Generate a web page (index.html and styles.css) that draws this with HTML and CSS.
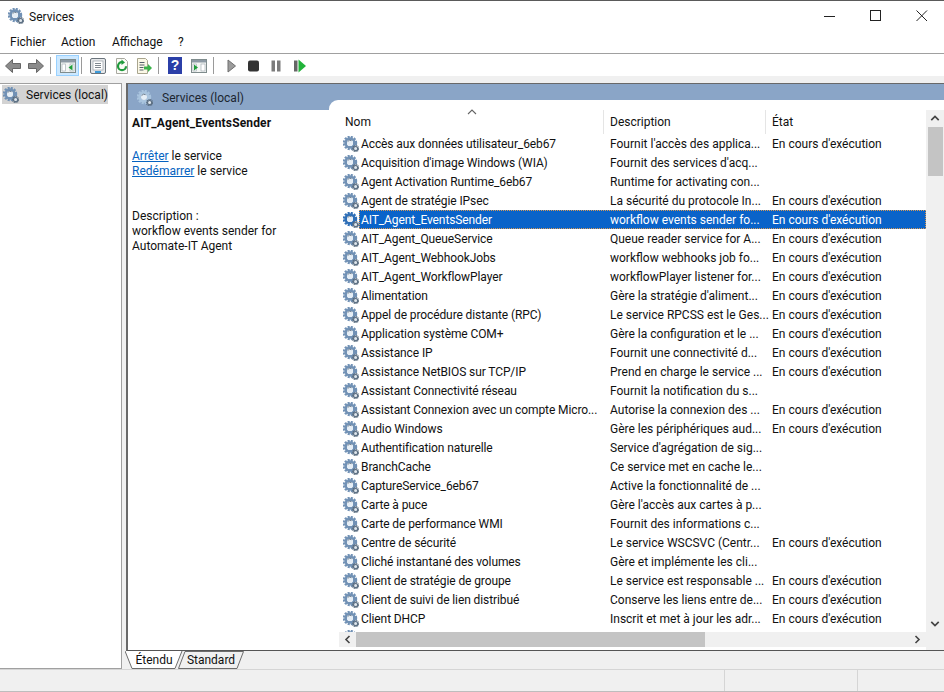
FILE: index.html
```html
<!DOCTYPE html>
<html lang="fr">
<head>
<meta charset="utf-8">
<title>Services</title>
<link rel="stylesheet" href="styles.css">
</head>
<body>
<svg class="defs" width="0" height="0">
  <symbol id="gear" viewBox="0 0 16 16">
    <circle cx="7" cy="7" r="6.100" fill="none" stroke="currentColor" stroke-width="2.200" stroke-dasharray="2.100 1.100"/>
    <circle cx="7" cy="7" r="4.400" fill="none" stroke="currentColor" stroke-width="2.600"/>
    <circle cx="7" cy="7" r="3" fill="#e6eef6"/>
    <path d="M4.600 5.600a3 3 0 0 1 4-.9" fill="none" stroke="#6f7f8f" stroke-width="1"/>
    <circle cx="12.600" cy="12.600" r="3" fill="none" stroke="#56687a" stroke-width="1.300" stroke-dasharray="1.100 .7"/>
    <circle cx="12.600" cy="12.600" r="2.100" fill="#dfe6ec" stroke="#5d7084" stroke-width="1.200"/>
  </symbol>
  <symbol id="panel" viewBox="0 0 16 16">
    <rect x=".5" y="1.5" width="15" height="13" fill="#f4f6f4" stroke="#7f8c8d"/>
    <rect x="1" y="2" width="14" height="2.5" fill="#8d9aa5"/>
    <rect x="2" y="6" width="3.5" height="7" fill="#fff" stroke="#9aa5ad" stroke-width=".6"/>
    <rect x="10" y="6" width="4" height="7" fill="#fff" stroke="#9aa5ad" stroke-width=".6"/>
  </symbol>
</svg>
<div class="window">
  <header class="titlebar">
    <svg class="gear title-gear"><use href="#gear"/></svg>
    <span class="title">Services</span>
    <div class="controls">
      <svg class="ctl" viewBox="0 0 12 12"><path d="M0 6.500h11" stroke="#222" fill="none"/></svg>
      <svg class="ctl" viewBox="0 0 12 12"><rect x=".5" y=".5" width="10" height="10" stroke="#222" fill="none"/></svg>
      <svg class="ctl" viewBox="0 0 12 12"><path d="M.5.5l10.500 10.500M11 .5L.5 11" stroke="#222" fill="none"/></svg>
    </div>
  </header>
  <nav class="menu">
    <span class="m-fichier">Fichier</span><span class="m-action">Action</span><span class="m-affichage">Affichage</span><span class="m-help">?</span>
  </nav>
  <div class="toolbar">
    <svg class="t16 ml5" viewBox="0 0 16 16"><path d="M.5 8L7.500 1.500v4h8v5h-8v4z" fill="#8b8b8b" stroke="#666"/></svg>
    <svg class="t16 ml7" viewBox="0 0 16 16"><path d="M15.500 8L8.500 1.500v4h-8v5h8v4z" fill="#8b8b8b" stroke="#666"/></svg>
    <i class="sep ml6"></i>
    <span class="active ml5">
      <svg class="t16" viewBox="0 0 16 16"><use href="#panel"/><path d="M12.500 6.500v6L8.500 9.500z" fill="#1f9d3a"/></svg>
    </span>
    <i class="sep ml2"></i>
    <svg class="t16 ml8" viewBox="0 0 16 16"><rect x=".5" y=".5" width="15" height="15" rx="1.500" fill="#e6e8ea" stroke="#6b747c"/><rect x="3" y="3" width="10" height="9" fill="#fff" stroke="#98a2aa" stroke-width=".7"/><path d="M5 5.500h6M5 7.500h6M5 9.500h6" stroke="#5f6b75" stroke-width=".8"/><rect x="5" y="13" width="6" height="2" fill="#3c9ad8"/></svg>
    <svg class="t16 ml8" viewBox="0 0 16 16"><path d="M2.500.5h8l3 3v12h-11z" fill="#fbfbf6" stroke="#a9a9a0"/><path d="M8 4.200a4 4 0 1 0 4 4" fill="none" stroke="#1f9a3c" stroke-width="2.200"/><path d="M7.500 1.500l3.500 3-3.500 2.500z" fill="#1f9a3c"/></svg>
    <svg class="t16 ml6" viewBox="0 0 16 16"><path d="M1.500.5h8l2 2v13h-10z" fill="#fbf8e6" stroke="#a9a58e"/><path d="M3.500 4.500h5M3.500 7h5M3.500 9.500h4M3.500 12h4" stroke="#55606a"/><path d="M8 8.500h4V6l4 4-4 4v-2.500H8z" fill="#3bb34a"/></svg>
    <i class="sep ml6"></i>
    <span class="help ml9">?</span>
    <svg class="t16 ml9" viewBox="0 0 16 16"><use href="#panel"/><path d="M3 6.500v6l4-3z" fill="#1f9d3a"/></svg>
    <i class="sep ml6"></i>
    <svg class="t10 ml13" viewBox="0 0 10 16"><path d="M1 2l7.500 6L1 14z" fill="#9c9c9c" stroke="#6f6f6f"/></svg>
    <svg class="t11 ml11" viewBox="0 0 11 16"><rect y="2.500" width="11" height="11" rx="2" fill="#333"/></svg>
    <svg class="t10 ml12" viewBox="0 0 10 16"><path d="M.5 2.500h3.500v11H.5zM6 2.500h3.500v11H6z" fill="#7b7b7b"/></svg>
    <svg class="t12 ml13" viewBox="0 0 12 16"><rect y="2.500" width="3.500" height="11" fill="#666"/><path d="M4.500 1.500l7.500 6.500-7.500 6.500z" fill="#22b33a"/></svg>
  </div>
  <div class="band"></div>
  <main class="main">
    <aside class="tree">
      <div class="tree-item"><svg class="gear tree-gear"><use href="#gear"/></svg><span>Services (local)</span></div>
    </aside>
    <section class="detail">
      <div class="content">
        <div class="desc">
          <div class="desc-head"><svg class="gear head-gear"><use href="#gear"/></svg><span>Services (local)</span></div>
          <div class="desc-body">
            <h1>AIT_Agent_EventsSender</h1>
            <p class="actions"><a href="#">Arrêter</a> le service<br><a href="#">Redémarrer</a> le service</p>
            <p>Description :<br>workflow events sender for<br>Automate-IT Agent</p>
          </div>
        </div>
        <div class="list">
          <div class="list-top">
            <div class="table">
              <div class="thead">
                <span class="sort">
                  <svg viewBox="0 0 10 6" width="10" height="6"><path d="M1 5l4-4 4 4" fill="none" stroke="#666" stroke-width="1.100"/></svg>
                </span>
                <div class="th th-name">Nom</div>
                <div class="th th-desc">Description</div>
                <div class="th th-state">État</div>
              </div>
              <div class="tbody">
                <div class="row"><svg class="gear"><use href="#gear"/></svg><div class="cells"><span class="c-name">Accès aux données utilisateur_6eb67</span><span class="c-desc">Fournit l'accès des applica...</span><span class="c-state">En cours d'exécution</span></div></div>
                <div class="row"><svg class="gear"><use href="#gear"/></svg><div class="cells"><span class="c-name">Acquisition d'image Windows (WIA)</span><span class="c-desc">Fournit des services d'acq...</span><span class="c-state"></span></div></div>
                <div class="row"><svg class="gear"><use href="#gear"/></svg><div class="cells"><span class="c-name">Agent Activation Runtime_6eb67</span><span class="c-desc">Runtime for activating con...</span><span class="c-state"></span></div></div>
                <div class="row"><svg class="gear"><use href="#gear"/></svg><div class="cells"><span class="c-name">Agent de stratégie IPsec</span><span class="c-desc">La sécurité du protocole In...</span><span class="c-state">En cours d'exécution</span></div></div>
                <div class="row selected"><svg class="gear"><use href="#gear"/></svg><div class="cells"><span class="c-name">AIT_Agent_EventsSender</span><span class="c-desc">workflow events sender fo...</span><span class="c-state">En cours d'exécution</span></div></div>
                <div class="row"><svg class="gear"><use href="#gear"/></svg><div class="cells"><span class="c-name">AIT_Agent_QueueService</span><span class="c-desc">Queue reader service for A...</span><span class="c-state">En cours d'exécution</span></div></div>
                <div class="row"><svg class="gear"><use href="#gear"/></svg><div class="cells"><span class="c-name">AIT_Agent_WebhookJobs</span><span class="c-desc">workflow webhooks job fo...</span><span class="c-state">En cours d'exécution</span></div></div>
                <div class="row"><svg class="gear"><use href="#gear"/></svg><div class="cells"><span class="c-name">AIT_Agent_WorkflowPlayer</span><span class="c-desc">workflowPlayer listener for...</span><span class="c-state">En cours d'exécution</span></div></div>
                <div class="row"><svg class="gear"><use href="#gear"/></svg><div class="cells"><span class="c-name">Alimentation</span><span class="c-desc">Gère la stratégie d'aliment...</span><span class="c-state">En cours d'exécution</span></div></div>
                <div class="row"><svg class="gear"><use href="#gear"/></svg><div class="cells"><span class="c-name">Appel de procédure distante (RPC)</span><span class="c-desc">Le service RPCSS est le Ges...</span><span class="c-state">En cours d'exécution</span></div></div>
                <div class="row"><svg class="gear"><use href="#gear"/></svg><div class="cells"><span class="c-name">Application système COM+</span><span class="c-desc">Gère la configuration et le ...</span><span class="c-state">En cours d'exécution</span></div></div>
                <div class="row"><svg class="gear"><use href="#gear"/></svg><div class="cells"><span class="c-name">Assistance IP</span><span class="c-desc">Fournit une connectivité d...</span><span class="c-state">En cours d'exécution</span></div></div>
                <div class="row"><svg class="gear"><use href="#gear"/></svg><div class="cells"><span class="c-name">Assistance NetBIOS sur TCP/IP</span><span class="c-desc">Prend en charge le service ...</span><span class="c-state">En cours d'exécution</span></div></div>
                <div class="row"><svg class="gear"><use href="#gear"/></svg><div class="cells"><span class="c-name">Assistant Connectivité réseau</span><span class="c-desc">Fournit la notification du s...</span><span class="c-state"></span></div></div>
                <div class="row"><svg class="gear"><use href="#gear"/></svg><div class="cells"><span class="c-name">Assistant Connexion avec un compte Micro...</span><span class="c-desc">Autorise la connexion des ...</span><span class="c-state">En cours d'exécution</span></div></div>
                <div class="row"><svg class="gear"><use href="#gear"/></svg><div class="cells"><span class="c-name">Audio Windows</span><span class="c-desc">Gère les périphériques aud...</span><span class="c-state">En cours d'exécution</span></div></div>
                <div class="row"><svg class="gear"><use href="#gear"/></svg><div class="cells"><span class="c-name">Authentification naturelle</span><span class="c-desc">Service d'agrégation de sig...</span><span class="c-state"></span></div></div>
                <div class="row"><svg class="gear"><use href="#gear"/></svg><div class="cells"><span class="c-name">BranchCache</span><span class="c-desc">Ce service met en cache le...</span><span class="c-state"></span></div></div>
                <div class="row"><svg class="gear"><use href="#gear"/></svg><div class="cells"><span class="c-name">CaptureService_6eb67</span><span class="c-desc">Active la fonctionnalité de ...</span><span class="c-state"></span></div></div>
                <div class="row"><svg class="gear"><use href="#gear"/></svg><div class="cells"><span class="c-name">Carte à puce</span><span class="c-desc">Gère l'accès aux cartes à p...</span><span class="c-state"></span></div></div>
                <div class="row"><svg class="gear"><use href="#gear"/></svg><div class="cells"><span class="c-name">Carte de performance WMI</span><span class="c-desc">Fournit des informations c...</span><span class="c-state"></span></div></div>
                <div class="row"><svg class="gear"><use href="#gear"/></svg><div class="cells"><span class="c-name">Centre de sécurité</span><span class="c-desc">Le service WSCSVC (Centr...</span><span class="c-state">En cours d'exécution</span></div></div>
                <div class="row"><svg class="gear"><use href="#gear"/></svg><div class="cells"><span class="c-name">Cliché instantané des volumes</span><span class="c-desc">Gère et implémente les cli...</span><span class="c-state"></span></div></div>
                <div class="row"><svg class="gear"><use href="#gear"/></svg><div class="cells"><span class="c-name">Client de stratégie de groupe</span><span class="c-desc">Le service est responsable ...</span><span class="c-state">En cours d'exécution</span></div></div>
                <div class="row"><svg class="gear"><use href="#gear"/></svg><div class="cells"><span class="c-name">Client de suivi de lien distribué</span><span class="c-desc">Conserve les liens entre de...</span><span class="c-state">En cours d'exécution</span></div></div>
                <div class="row"><svg class="gear"><use href="#gear"/></svg><div class="cells"><span class="c-name">Client DHCP</span><span class="c-desc">Inscrit et met à jour les adr...</span><span class="c-state">En cours d'exécution</span></div></div>
                <div class="row"><svg class="gear"><use href="#gear"/></svg></div>
              </div>
            </div>
            <div class="vscroll">
              <svg class="chev" viewBox="0 0 10 16"><path d="M1.500 9.500L5 6l3.500 3.500" fill="none" stroke="#444" stroke-width="1.600"/></svg>
              <div class="vthumb"></div>
              <div class="grow"></div>
              <svg class="chev" viewBox="0 0 10 16"><path d="M1.500 6.500L5 10l3.500-3.500" fill="none" stroke="#444" stroke-width="1.600"/></svg>
            </div>
          </div>
          <div class="list-bottom">
            <div class="hscroll">
              <svg class="hchev" viewBox="0 0 16 15"><path d="M10 4L6.500 7.500 10 11" fill="none" stroke="#444" stroke-width="1.600"/></svg>
              <div class="hthumb"></div>
              <div class="grow"></div>
              <svg class="hchev" viewBox="0 0 16 15"><path d="M6 4l3.500 3.500L6 11" fill="none" stroke="#444" stroke-width="1.600"/></svg>
            </div>
            <div class="corner"></div>
          </div>
        </div>
      </div>
      <div class="tabs">
        <div class="tab tab-ext">
          <svg class="tab-shape" viewBox="0 0 58 18" preserveAspectRatio="none"><path d="M0 0L7 17.500H50L57 0" fill="#fff" stroke="#6d6d6d"/></svg>
          <span>Étendu</span>
        </div>
        <div class="tab tab-std">
          <svg class="tab-shape" viewBox="0 0 66 18" preserveAspectRatio="none"><path d="M.5 17.500L7 .5H65.500L59 17.500z" fill="#f0f0f0" stroke="#6d6d6d"/></svg>
          <span>Standard</span>
        </div>
      </div>
    </section>
  </main>
  <footer class="status">
    <div class="st st1"></div>
    <div class="st st2"></div>
    <div class="st st3"></div>
  </footer>
</div>
</body>
</html>
```
FILE: styles.css
```css
* { box-sizing: border-box; }
html, body { margin: 0; padding: 0; }
body {
  width: 944px; height: 692px; overflow: hidden;
  font-family: Roboto, "Noto Sans", sans-serif;
  font-size: 12px; color: #111; background: #f0f0f0;
}
.defs { position: absolute; }
.window { display: flex; flex-direction: column; height: 692px; }

.gear { width: 16px; height: 16px; flex: none; color: #7191b5; }

.titlebar {
  height: 31px; flex: none; display: flex; align-items: center;
  background: #fff; border-top: 1px solid #5a5a5a;
  padding-left: 8px;
}
.title { margin-left: 5px; padding-top: 1px; }
.controls { margin-left: auto; display: flex; padding-right: 16px; gap: 34px; }
.ctl { width: 12px; height: 12px; }

.menu {
  height: 23px; flex: none; display: flex; align-items: center;
  background: #fff; border-bottom: 1px solid #a0a0a0; padding-bottom: 1px;
}
.m-fichier { margin-left: 10px; width: 51px; }
.m-action { width: 51px; }
.m-affichage { width: 66px; }

.toolbar {
  height: 22px; flex: none; display: flex; align-items: center; background: #fff;
  padding-top: 1px;
}
.t16 { width: 16px; height: 16px; flex: none; }
.t10 { width: 10px; height: 16px; flex: none; }
.t11 { width: 11px; height: 16px; flex: none; }
.t12 { width: 12px; height: 16px; flex: none; }
.sep { width: 1px; height: 17px; background: #9a9a9a; flex: none; }
.active {
  width: 23px; height: 21px; display: flex; align-items: center; justify-content: center;
  background: #cce8ff; border: 1px solid #99d1ff; flex: none;
}
.help {
  width: 14px; height: 17px; flex: none; background: #2b3fa8; color: #fff;
  font: bold 14px/17px "Liberation Sans", sans-serif; text-align: center;
}
.ml2 { margin-left: 2px; } .ml5 { margin-left: 5px; } .ml6 { margin-left: 6px; }
.ml7 { margin-left: 7px; } .ml8 { margin-left: 8px; } .ml9 { margin-left: 9px; }
.ml11 { margin-left: 11px; } .ml12 { margin-left: 12px; } .ml13 { margin-left: 13px; }

.band { height: 7px; flex: none; background: #f0f0f0; }

.main { display: flex; height: 586px; flex: none; gap: 4px; }
.tree {
  width: 122px; flex: none; background: #fff; padding: 1px 0 0 2px;
  border: 1px solid #a0a0a0; border-left: 0;
}
.tree-item {
  width: 106px; height: 19px; display: flex; align-items: center; gap: 7px;
  background: #d3d3d3; padding-left: 1px; white-space: nowrap;
}

.detail { width: 818px; flex: none; display: flex; flex-direction: column; }
.content {
  height: 568px; flex: none; display: flex; background: #8aa5c7;
  border-top: 1px solid #696969; border-left: 2px solid #696969; border-bottom: 1px solid #555;
}
.desc { width: 201px; flex: none; display: flex; flex-direction: column; }
.desc-head {
  height: 26px; flex: none; display: flex; align-items: center; gap: 9px;
  padding-left: 9px; padding-top: 1px; color: #1c2530;
}
.head-gear { color: #a9c4de; }
.desc-body { flex: 1; background: #fff; padding: 5px 4px; line-height: 15px; }
.desc-body h1 { font-size: 12px; line-height: 16px; font-weight: 700; margin: 0 0 18px; letter-spacing: .15px; }
.desc-body p { margin: 0 0 30px; }
.desc-body a { color: #0563c1; }

.list {
  width: 615px; flex: none; margin-top: 16px; display: flex; flex-direction: column;
  background: #fff; border-top-left-radius: 9px; overflow: hidden;
}
.list-top { display: flex; height: 532px; flex: none; }
.table { width: 597px; flex: none; display: flex; flex-direction: column; }
.thead { height: 34px; flex: none; display: flex; padding-top: 10px; position: relative; }
.sort { position: absolute; left: 138px; top: 9px; line-height: 0; }
.th { height: 24px; display: flex; align-items: center; padding-left: 6px; padding-bottom: 1px; }
.th-name { width: 274px; padding-left: 16px; }
.th-desc { width: 162px; border-left: 1px solid #e5e5e5; }
.th-state { flex: 1; border-left: 1px solid #e5e5e5; }
.tbody { height: 498px; overflow: hidden; }
.row { height: 19px; display: flex; align-items: center; padding-left: 14px; }
.cells { flex: 1; height: 19px; display: flex; align-items: center; white-space: nowrap; }
.c-name { width: 244px; padding-left: 2px; letter-spacing: -.1px; }
.c-desc { width: 162px; padding-left: 7px; }
.c-state { flex: 1; padding-left: 7px; }
.row.selected .gear { color: #2f6fb7; }
.row.selected .cells {
  background: #0a63c9; color: #fff; outline: 1px dotted #d99a55; outline-offset: -1px;
}

.vscroll {
  width: 18px; flex: none; margin-top: 10px; background: #f0f0f0;
  display: flex; flex-direction: column; align-items: center;
}
.chev { width: 16px; height: 17px; flex: none; }
.vthumb { width: 15px; height: 49px; flex: none; background: #c4c4c4; }
.grow { flex: 1; }
.list-bottom { display: flex; flex: 1; padding-left: 10px; }
.hscroll {
  width: 587px; flex: none; height: 15px; background: #f0f0f0; display: flex; align-items: center;
}
.hchev { width: 17px; height: 15px; flex: none; }
.hthumb { width: 349px; height: 15px; flex: none; background: #c4c4c4; }
.corner { width: 18px; flex: none; background: #f0f0f0; }

.tabs { flex: 1; display: flex; margin-left: -1px; }
.tab { position: relative; height: 18px; display: flex; align-items: center; justify-content: center; flex: none; }
.tab span { position: relative; }
.tab-shape { position: absolute; inset: 0; width: 100%; height: 100%; }
.tab-ext { width: 58px; z-index: 1; margin-right: -5px; }
.tab-std { width: 66px; }

.status {
  flex: 1; display: flex; background: #f0f0f0; border-top: 1px solid #d5d5d5; border-bottom: 1px solid #bdbdbd;
}
.st1 { width: 724px; }
.st2 { width: 133px; border-left: 1px solid #d5d5d5; }
.st3 { flex: 1; border-left: 1px solid #d5d5d5; }
```
